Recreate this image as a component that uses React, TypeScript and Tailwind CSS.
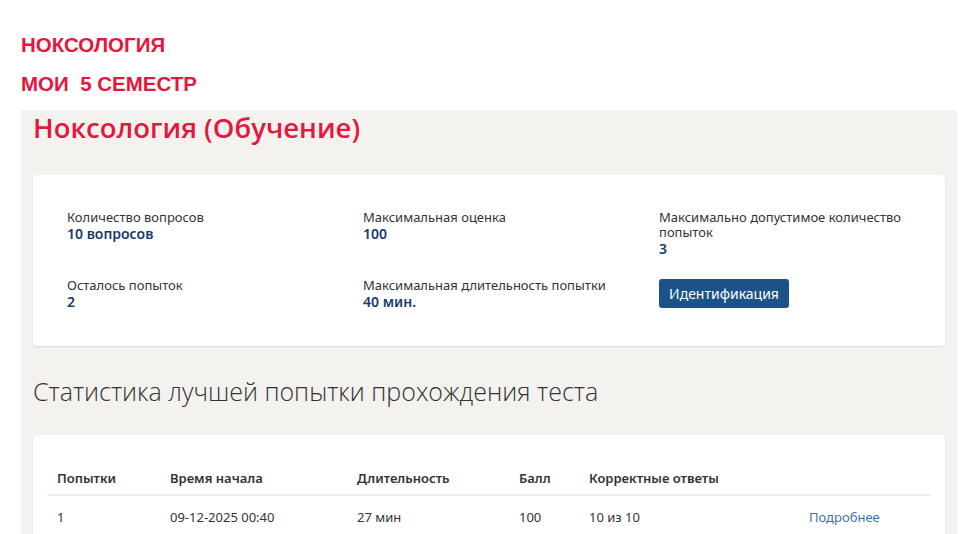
import React from "react";

const body = { fontFamily: '"Noto Sans", "Open Sans", sans-serif' };

function Info({ label, value, labelClass = "" }: { label: string; value: string; labelClass?: string }) {
  return (
    <div>
      <div className={`text-[13px] leading-[15px] text-[#333333] ${labelClass}`}>{label}</div>
      <div className="mt-[1px] text-[14px] leading-[16px] font-semibold text-[#173a6e]">{value}</div>
    </div>
  );
}

export default function App() {
  const cols = "grid grid-cols-[113px_187px_162px_70px_220px_1fr]";
  return (
    <div className="bg-white min-h-[534px] w-[959px]" style={body}>
      <div className="pl-[21px] pt-[25px] mb-[7px]" style={{ fontFamily: '"Liberation Sans", Arial, sans-serif' }}>
        <div className="h-[39px] leading-[39px] text-[20.5px] font-bold text-[#e4173e]">НОКСОЛОГИЯ</div>
        <div className="h-[39px] leading-[39px] text-[20.5px] font-bold text-[#e4173e] whitespace-pre">МОИ  5 СЕМЕСТР</div>
      </div>
      <div className="ml-[21px] mr-[2px] bg-[#f3f2ef] px-[12px] pb-[40px]">
        <h1
          className="text-[27.5px] leading-[36px] font-semibold text-[#e4173e]"
          style={{ fontFamily: '"Open Sans", sans-serif' }}
        >
          Ноксология (Обучение)
        </h1>
        <div className="mt-[29px] bg-white rounded-[4px] shadow-[0_1px_2px_rgba(0,0,0,0.1)] pl-[34px] pt-[35px] pb-[36px]">
          <div className="grid grid-cols-[296px_296px_1fr] gap-y-[21px] items-start">
            <Info label="Количество вопросов" value="10 вопросов" />
            <Info label="Максимальная оценка" value="100" />
            <Info label="Максимально допустимое количество попыток" value="3" labelClass="w-[250px]" />
            <Info label="Осталось попыток" value="2" />
            <Info label="Максимальная длительность попытки" value="40 мин." />
            <div>
              <button className="mt-[1px] h-[29px] w-[130px] rounded-[3px] bg-[#1b5288] text-white text-[14px] leading-[29px]">
                Идентификация
              </button>
            </div>
          </div>
        </div>
        <h2
          className="mt-[28px] text-[25px] leading-[34px] font-light text-[#333333]"
          style={{ fontFamily: '"Open Sans", sans-serif' }}
        >
          Статистика лучшей попытки прохождения теста
        </h2>
        <div className="mt-[27px] bg-white rounded-[4px] shadow-[0_1px_2px_rgba(0,0,0,0.1)] px-[14px] pt-[30px] pb-[20px]">
          <div className={`${cols} border-b-2 border-[#eeeeee] text-[13px] font-semibold text-[#333333]`}>
            <div className="pl-[10px] pt-[5px] pb-[8px] leading-[16px]">Попытки</div>
            <div className="pl-[10px] pt-[5px] pb-[8px] leading-[16px]">Время начала</div>
            <div className="pl-[10px] pt-[5px] pb-[8px] leading-[16px]">Длительность</div>
            <div className="pl-[10px] pt-[5px] pb-[8px] leading-[16px]">Балл</div>
            <div className="pl-[10px] pt-[5px] pb-[8px] leading-[16px]">Корректные ответы</div>
            <div className="pl-[10px] pt-[5px] pb-[8px] leading-[16px]"></div>
          </div>
          <div className={`${cols} text-[13px] text-[#333333]`}>
            <div className="pl-[10px] pt-[13px] pb-[13px] leading-[16px]">1</div>
            <div className="pl-[10px] pt-[13px] pb-[13px] leading-[16px]">09-12-2025 00:40</div>
            <div className="pl-[10px] pt-[13px] pb-[13px] leading-[16px]">27 мин</div>
            <div className="pl-[10px] pt-[13px] pb-[13px] leading-[16px]">100</div>
            <div className="pl-[10px] pt-[13px] pb-[13px] leading-[16px]">10 из 10</div>
            <div className="pl-[10px] pt-[13px] pb-[13px] leading-[16px] text-[#3b72ad]">Подробнее</div>
          </div>
        </div>
      </div>
    </div>
  );
}
